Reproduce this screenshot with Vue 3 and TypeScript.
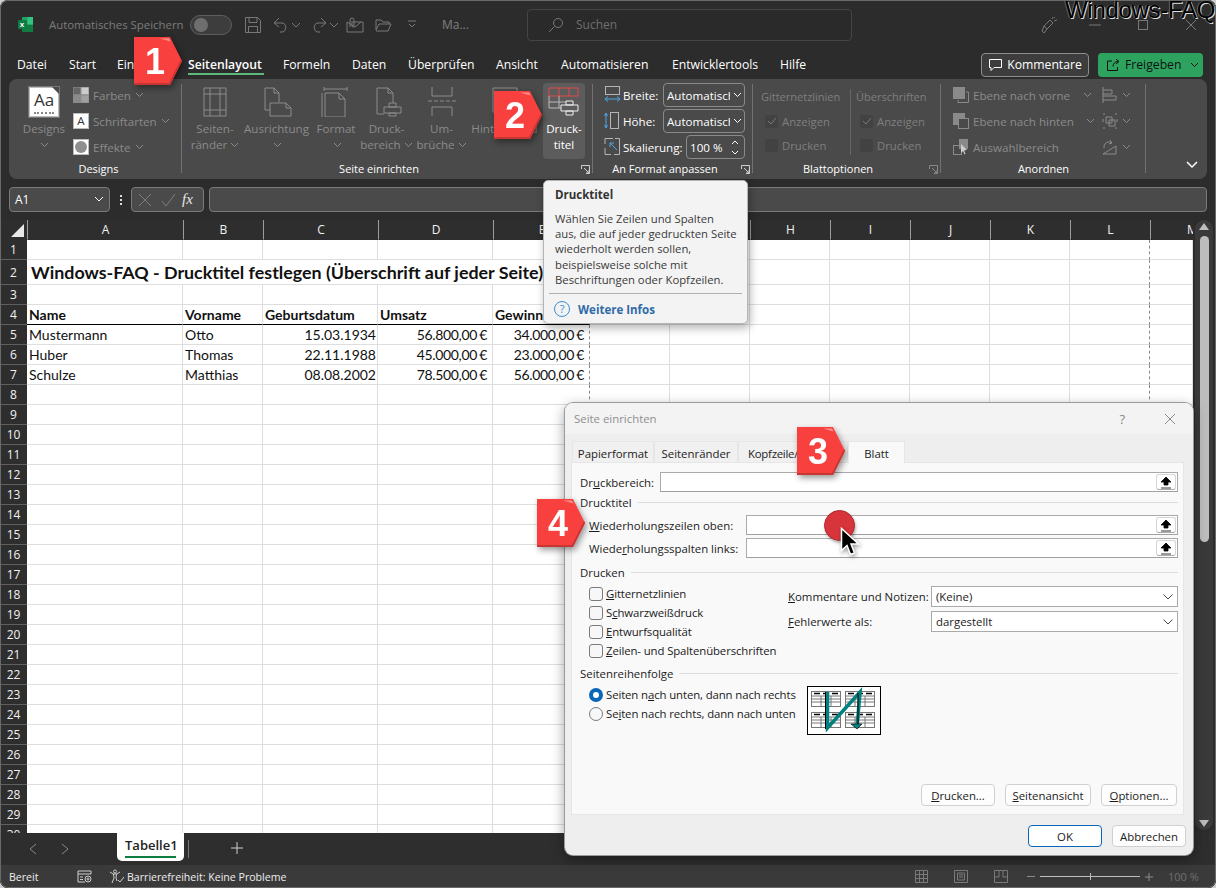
<template>
  <div class="window">
    <!-- title bar -->
    <header class="titlebar">
      <svg class="logo" width="17" height="17" viewBox="0 0 17 17">
        <rect x="5" y="1" width="11" height="15" rx="1" fill="#21a366" />
        <rect x="5" y="8.5" width="11" height="7.5" fill="#107c41" />
        <rect x="10.5" y="1" width="5.5" height="7.5" fill="#33c481" />
        <rect x="1" y="4" width="9" height="9" rx="1" fill="#107c41" />
        <text x="2.8" y="11.3" class="logo-x">x</text>
      </svg>
      <span class="autosave">Automatisches Speichern</span>
      <span class="toggle"><i></i></span>
      <svg class="qat ml12" width="18" height="18" viewBox="0 0 18 18"><path d="M1.5 1.5h12l3 3v12h-15zM5 1.5v5h8v-5M4.5 16.5v-6h9v6" /></svg>
      <svg class="qat ml11" width="16" height="16" viewBox="0 0 16 16"><path d="M1 6l5-5M1 6l5 4M1 6h9a5 5 0 0 1 0 9H7" /></svg>
      <svg class="qat ml2" width="10" height="6" viewBox="0 0 10 6"><path d="M1 1l4 4 4-4" /></svg>
      <svg class="qat ml10" width="16" height="16" viewBox="0 0 16 16"><path d="M15 6l-5-5M15 6l-5 4M15 6H6a5 5 0 0 0 0 9h3" /></svg>
      <svg class="qat ml2" width="10" height="6" viewBox="0 0 10 6"><path d="M1 1l4 4 4-4" /></svg>
      <svg class="qat ml7" width="18" height="16" viewBox="0 0 18 16"><path d="M7 5h10v10H1V5M1 5l8 5 6-5M4 10V3a2 2 0 0 1 4 0v6a1 1 0 0 1-2 0V4" /></svg>
      <svg class="qat ml11" width="17" height="14" viewBox="0 0 17 14"><path d="M1 12V2h5l2 2h6v2M1 12l3-6h12l-3 7H1" /></svg>
      <svg class="qat ml15" width="10" height="9" viewBox="0 0 10 9"><path d="M1 1h8M2 4l3 3 3-3" /></svg>
      <span class="filename">Ma...</span>
      <div class="search">
        <svg class="qat" width="16" height="16" viewBox="0 0 16 16"><circle cx="10" cy="6" r="4.5" /><path d="M6.5 9.5L1 15" /></svg>
        <span>Suchen</span>
      </div>
      <svg class="qat ml188" width="18" height="18" viewBox="0 0 18 18"><path d="M4 10l6-6 3 3-6 6zM4 10l-2 5 2 2 3-4M12 3l1-2M14 5l3-1M14 2l1-1" /></svg>
      <svg class="qat ml31" width="12" height="12" viewBox="0 0 12 12"><path d="M0 6h12" /></svg>
      <svg class="qat ml37" width="10" height="10" viewBox="0 0 10 10"><rect x="0.5" y="0.5" width="9" height="9" /></svg>
      <svg class="qat ml37" width="12" height="12" viewBox="0 0 12 12"><path d="M1 1l10 10M11 1L1 11" /></svg>
    </header>
    <div class="watermark">Windows-FAQ</div>

    <!-- ribbon tabs -->
    <nav class="menu">
      <span v-for="t in menuTabs" :key="t" class="menu-item" :class="{ current: t === 'Seitenlayout' }"><b>{{ t }}</b></span>
      <button class="comment-btn">
        <svg width="15" height="14" viewBox="0 0 15 14"><path d="M1.5 1.5h12v8H6l-3 3v-3H1.5z" /></svg>
        Kommentare
      </button>
      <button class="share-btn">
        <svg width="15" height="14" viewBox="0 0 15 14"><path d="M6 3H1.5v9.5h10V9M7 8.5c0-3 2-5 5-5M10 1l3 2.5L10 6" /></svg>
        <span class="share-label">Freigeben</span>
        <svg class="share-chev" width="9" height="6" viewBox="0 0 9 6"><path d="M1 1l3.5 3.5L8 1" /></svg>
      </button>
    </nav>

    <!-- ribbon -->
    <section class="ribbon">
      <div class="group g-designs">
        <div class="body designs-body">
          <div class="big">
            <div class="aa-box"><span>Aa</span><i></i></div>
            <div class="big-label">Designs<br /><svg class="chev" width="9" height="6" viewBox="0 0 9 6"><path d="M1 1l3.5 3.5L8 1" /></svg></div>
          </div>
          <div class="small-col">
            <div class="small">
              <svg width="16" height="16" viewBox="0 0 16 16"><rect width="8" height="8" fill="#666" /><rect x="8" width="8" height="8" fill="#ccc" /><rect y="8" width="8" height="8" fill="#8a8a8a" /><rect x="8" y="8" width="8" height="8" fill="#a0a0a0" /></svg>
              <span>Farben</span><svg class="chev" width="9" height="6" viewBox="0 0 9 6"><path d="M1 1l3.5 3.5L8 1" /></svg>
            </div>
            <div class="small">
              <span class="font-a">A</span>
              <span>Schriftarten</span><svg class="chev" width="9" height="6" viewBox="0 0 9 6"><path d="M1 1l3.5 3.5L8 1" /></svg>
            </div>
            <div class="small">
              <span class="font-a"><i class="dot"></i></span>
              <span>Effekte</span><svg class="chev" width="9" height="6" viewBox="0 0 9 6"><path d="M1 1l3.5 3.5L8 1" /></svg>
            </div>
          </div>
        </div>
        <div class="group-label">Designs</div>
      </div>

      <div class="group g-page">
        <div class="body page-body">
          <div v-for="b in pageButtons" :key="b.top" class="big">
            <svg class="big-icon" width="30" height="30" viewBox="0 0 30 30"><path :d="b.d" /></svg>
            <div class="big-label">{{ b.top }}<br />{{ b.bottom }}<svg v-if="b.chev" class="chev" width="9" height="6" viewBox="0 0 9 6"><path d="M1 1l3.5 3.5L8 1" /></svg></div>
          </div>
          <div class="big hot">
            <svg class="big-icon print" width="32" height="30" viewBox="0 0 32 30">
              <path class="red" d="M1 1h29v8H1zM11 1v8M21 1v8" />
              <path d="M1 9v12h10V9M1 15h18M11 21h2" />
              <path class="wh" d="M18 14h7v4h-7zM13 18h17v6H13zM18 24h7v4h-7z" />
            </svg>
            <div class="big-label">Druck-<br />titel</div>
          </div>
        </div>
        <div class="group-label">Seite einrichten</div>
        <svg class="launcher" width="9" height="9" viewBox="0 0 9 9"><path d="M.5 4V.5h8v8H5M3 3l5 5M8 5v3H5" /></svg>
      </div>

      <div class="group g-fit">
        <div class="body fit-body">
          <div class="fit-row">
            <svg class="fit-icon" width="17" height="18" viewBox="0 0 17 18"><rect x="1.5" y="0.5" width="14" height="8" /><path class="blue" d="M1 13h15M1 13l3-2.5M1 13l3 2.5M16 13l-3-2.5M16 13l-3 2.5" /></svg>
            <span class="fit-label">Breite:</span>
            <span class="combo"><span class="combo-text">Automatisch</span><svg width="9" height="6" viewBox="0 0 9 6"><path d="M1 1l3.5 3.5L8 1" /></svg></span>
          </div>
          <div class="fit-row">
            <svg class="fit-icon" width="17" height="18" viewBox="0 0 17 18"><rect x="6.5" y="0.5" width="8" height="16" /><path class="blue" d="M2 1v15M2 1L.5 4M2 1l1.5 3M2 16L.5 13M2 16l1.5-3" /></svg>
            <span class="fit-label">Höhe:</span>
            <span class="combo"><span class="combo-text">Automatisch</span><svg width="9" height="6" viewBox="0 0 9 6"><path d="M1 1l3.5 3.5L8 1" /></svg></span>
          </div>
          <div class="fit-row">
            <svg class="fit-icon" width="17" height="18" viewBox="0 0 17 18"><path d="M1 6V.5h8M11 .5h4.500v16H10M1 10v6.500h6" /><path class="blue" d="M6 5l7 7M6 5h4M6 5v4" /></svg>
            <span class="fit-label scale-label">Skalierung:</span>
            <span class="spin">100 %<span class="spin-arrows"><svg width="8" height="5" viewBox="0 0 8 5"><path d="M1 4l3-3 3 3" /></svg><svg width="8" height="5" viewBox="0 0 8 5"><path d="M1 1l3 3 3-3" /></svg></span></span>
          </div>
        </div>
        <div class="group-label">An Format anpassen</div>
        <svg class="launcher" width="9" height="9" viewBox="0 0 9 9"><path d="M.5 4V.5h8v8H5M3 3l5 5M8 5v3H5" /></svg>
      </div>

      <div class="group g-sheet">
        <div class="body sheet-body">
          <div class="sheet-col">
            <div class="sheet-head">Gitternetzlinien</div>
            <div class="sheet-check"><span class="dark-cb on"><svg width="10" height="8" viewBox="0 0 10 8"><path d="M1 4l3 3 5-6" /></svg></span>Anzeigen</div>
            <div class="sheet-check"><span class="dark-cb"></span>Drucken</div>
          </div>
          <div class="sheet-col second">
            <div class="sheet-head">Überschriften</div>
            <div class="sheet-check"><span class="dark-cb on"><svg width="10" height="8" viewBox="0 0 10 8"><path d="M1 4l3 3 5-6" /></svg></span>Anzeigen</div>
            <div class="sheet-check"><span class="dark-cb"></span>Drucken</div>
          </div>
        </div>
        <div class="group-label">Blattoptionen</div>
        <svg class="launcher dim" width="9" height="9" viewBox="0 0 9 9"><path d="M.5 4V.5h8v8H5M3 3l5 5M8 5v3H5" /></svg>
      </div>

      <div class="group g-arrange">
        <div class="body arrange-body">
          <div class="arrange-col">
            <div class="small">
              <svg width="16" height="16" viewBox="0 0 16 16"><rect x="0.500" y="0.500" width="11" height="11" fill="#8a8a8a" /><path d="M13 5h2.500v10.500H5V13" /></svg>
              <span class="arr-text">Ebene nach vorne</span><svg class="chev" width="9" height="6" viewBox="0 0 9 6"><path d="M1 1l3.500 3.500L8 1" /></svg>
            </div>
            <div class="small">
              <svg width="16" height="16" viewBox="0 0 16 16"><rect x="0.500" y="0.500" width="11" height="11" fill="#8a8a8a" /><rect x="5.500" y="5.500" width="10" height="10" fill="#4a4a4a" /></svg>
              <span class="arr-text back">Ebene nach hinten</span><svg class="chev" width="9" height="6" viewBox="0 0 9 6"><path d="M1 1l3.500 3.500L8 1" /></svg>
            </div>
            <div class="small">
              <svg width="16" height="16" viewBox="0 0 16 16"><rect x="6.500" y="0.500" width="8" height="9" fill="#8a8a8a" /><rect x="0.500" y="6.500" width="8" height="9" /><path d="M8 5l6 6-3 .5 1.500 3.500-1 .5L10 12l-2 2z" fill="#cfcfcf" stroke="none" /></svg>
              <span>Auswahlbereich</span>
            </div>
          </div>
          <div class="arrange-col narrow">
            <div class="small">
              <svg width="16" height="16" viewBox="0 0 16 16"><path d="M1 0v16M1 3h9v4H1M1 9h13v4H1" /></svg>
              <svg class="chev" width="9" height="6" viewBox="0 0 9 6"><path d="M1 1l3.500 3.500L8 1" /></svg>
            </div>
            <div class="small">
              <svg width="16" height="16" viewBox="0 0 16 16"><path d="M4 4h6v6H4zM7 7h6v6H7zM1 1h2M13 1h2M1 15h2M13 15h2M1 6v3M15 6v3" /></svg>
              <svg class="chev" width="9" height="6" viewBox="0 0 9 6"><path d="M1 1l3.500 3.500L8 1" /></svg>
            </div>
            <div class="small">
              <svg width="16" height="16" viewBox="0 0 16 16"><path d="M1 15L14 7v8zM2 9a5 5 0 0 1 8-5M8 1l2 3-3 1" /></svg>
              <svg class="chev" width="9" height="6" viewBox="0 0 9 6"><path d="M1 1l3.500 3.500L8 1" /></svg>
            </div>
          </div>
        </div>
        <div class="group-label">Anordnen</div>
      </div>
      <svg class="collapse" width="12" height="8" viewBox="0 0 12 8"><path d="M1 1l5 5 5-5" /></svg>
    </section>

    <!-- formula bar -->
    <div class="formula">
      <div class="namebox">A1<svg width="10" height="7" viewBox="0 0 10 7"><path d="M1 1l4 4 4-4" /></svg></div>
      <span class="dots"><i></i><i></i><i></i></span>
      <div class="fx-box">
        <svg width="14" height="14" viewBox="0 0 14 14"><path d="M1 1l12 12M13 1L1 13" /></svg>
        <svg width="15" height="14" viewBox="0 0 15 14"><path d="M1 8l4 5L14 1" /></svg>
        <span class="fx">fx</span>
      </div>
      <div class="formula-input"></div>
    </div>

    <!-- sheet -->
    <div class="sheet">
      <div class="grid">
        <div class="corner"><i></i></div>
        <div v-for="c in columns" :key="c" class="colhead" :class="{ 'col-m': c === 'M' }">{{ c }}</div>
        <template v-for="r in rows" :key="r.n">
          <div class="rowhead">{{ r.n }}</div>
          <div v-if="r.title" class="cell title-cell brk">{{ r.title }}</div>
          <template v-if="!r.title">
            <div
              v-for="(c, i) in columns.slice(0, 5)"
              :key="c"
              class="cell"
              :class="{ num: i === 2 && r.n > 4, money: i > 2 && r.n > 4, strong: r.n === 4, brk: i === 4 }"
            >{{ r.cells[i] }}</div>
          </template>
          <div v-for="c in columns.slice(5)" :key="c" class="cell" :class="{ brk: c === 'L' }"></div>
        </template>
      </div>
      <div class="vscroll">
        <div class="track">
          <i class="up"></i>
          <span class="thumb"></span>
          <i class="down"></i>
        </div>
      </div>
    </div>

    <!-- sheet tabs -->
    <div class="tabs">
      <svg class="nav-arrow" width="8" height="12" viewBox="0 0 8 12"><path d="M7 1L1 6l6 5" /></svg>
      <svg class="nav-arrow second" width="8" height="12" viewBox="0 0 8 12"><path d="M1 1l6 5-6 5" /></svg>
      <div class="sheet-tab"><span>Tabelle1</span></div>
      <i class="tab-sep"></i>
      <svg class="plus" width="12" height="12" viewBox="0 0 12 12"><path d="M6 0v12M0 6h12" /></svg>
    </div>

    <!-- status bar -->
    <footer class="status">
      <span class="ready">Bereit</span>
      <svg class="st-icon" width="15" height="13" viewBox="0 0 15 13"><path d="M1 1h13v3H1zM1 4v8h7M3 7h3M3 9.500h3" /><circle cx="11" cy="9" r="3" /><circle cx="11" cy="9" r="1" /></svg>
      <svg class="st-icon access" width="16" height="15" viewBox="0 0 16 15"><circle cx="6" cy="2.500" r="1.500" /><path d="M1 3l3 2h4l3-2M4.500 5l.5 4-2 5M7.500 5L7 9l1 3M9 11l2 2 4-5" /></svg>
      <span class="access-text">Barrierefreiheit: Keine Probleme</span>
      <svg class="view-icon" width="13" height="13" viewBox="0 0 13 13"><path d="M.5.5h12v12H.5zM4.500.5v12M8.500.5v12M.5 4.500h12M.5 8.500h12" /></svg>
      <svg class="view-icon v2" width="14" height="13" viewBox="0 0 14 13"><path d="M.5.5h13v12H.5zM3.500 3h7v7h-7zM5 5h4M5 7h4" /></svg>
      <svg class="view-icon v2" width="14" height="13" viewBox="0 0 14 13"><path d="M.5.5h13v12H.5zM.5 7h4.500V.5M9 .5V7h4.500" /></svg>
      <div class="zoom">
        <i class="z-minus"></i>
        <span class="z-track"><i></i></span>
        <svg width="8" height="8" viewBox="0 0 8 8"><path d="M4 0v8M0 4h8" /></svg>
        <span class="z-val">100 %</span>
      </div>
    </footer>

    <!-- tooltip -->
    <aside class="tooltip">
      <div class="tip-title">Drucktitel</div>
      <p class="tip-text">Wählen Sie Zeilen und Spalten aus, die auf jeder gedruckten Seite wiederholt werden sollen, beispielsweise solche mit Beschriftungen oder Kopfzeilen.</p>
      <div class="tip-more">
        <span class="tip-help">?</span>
        <b>Weitere Infos</b>
      </div>
    </aside>

    <!-- dialog -->
    <div class="dialog">
      <div class="dlg-title">
        <span>Seite einrichten</span>
        <span class="dlg-help">?</span>
        <svg width="12" height="12" viewBox="0 0 12 12"><path d="M1 1l10 10M11 1L1 11" /></svg>
      </div>
      <div class="dlg-tabs">
        <span class="dlg-tab t1">Papierformat</span>
        <span class="dlg-tab t2">Seitenränder</span>
        <span class="dlg-tab t3">Kopfzeile/Fußzeile</span>
        <span class="dlg-tab t4">Blatt</span>
      </div>
      <div class="panel">
        <div class="field first">
          <label class="lab-print">Dr<u>u</u>ckbereich:</label>
          <div class="input"><span class="pick"><svg width="12" height="13" viewBox="0 0 12 13"><path d="M6 1l5 5H8v3H4V6H1zM1 12h10" /></svg></span></div>
        </div>
        <div class="sect"><span>Drucktitel</span><i></i></div>
        <div class="field indented">
          <label class="lab-rep"><u>W</u>iederholungszeilen oben:</label>
          <div class="input"><span class="pick"><svg width="12" height="13" viewBox="0 0 12 13"><path d="M6 1l5 5H8v3H4V6H1zM1 12h10" /></svg></span></div>
        </div>
        <div class="field indented second">
          <label class="lab-rep">Wiede<u>r</u>holungsspalten links:</label>
          <div class="input"><span class="pick"><svg width="12" height="13" viewBox="0 0 12 13"><path d="M6 1l5 5H8v3H4V6H1zM1 12h10" /></svg></span></div>
        </div>
        <div class="sect print-sect"><span>Drucken</span><i></i></div>
        <div class="print-opts">
          <div class="checks">
            <div v-for="o in printOptions" :key="o.rest" class="opt">
              <span class="cb"></span>
              <span>{{ o.pre }}<u>{{ o.key }}</u>{{ o.rest }}</span>
            </div>
          </div>
          <div class="selects">
            <div class="sel-row">
              <label><u>K</u>ommentare und Notizen:</label>
              <div class="select">(Keine)<svg width="10" height="6" viewBox="0 0 10 6"><path d="M.5.5L5 5 9.500.5" /></svg></div>
            </div>
            <div class="sel-row">
              <label><u>F</u>ehlerwerte als:</label>
              <div class="select">dargestellt<svg width="10" height="6" viewBox="0 0 10 6"><path d="M.5.5L5 5 9.500.5" /></svg></div>
            </div>
          </div>
        </div>
        <div class="sect order-sect"><span>Seitenreihenfolge</span><i></i></div>
        <div class="order">
          <div class="radios">
            <div class="opt"><span class="radio on"></span><span>Seiten n<u>a</u>ch unten, dann nach rechts</span></div>
            <div class="opt"><span class="radio"></span><span>Se<u>i</u>ten nach rechts, dann nach unten</span></div>
          </div>
          <svg class="order-pic" width="74" height="49" viewBox="0 0 74 49">
            <rect x="0.500" y="0.500" width="73" height="48" fill="#fff" stroke="#000" />
            <g v-for="p in miniPages" :key="p.x + '-' + p.y" :transform="`translate(${p.x} ${p.y})`">
              <rect x="0.500" y="0.500" width="29" height="15" fill="#fff" stroke="#777" />
              <path d="M3 2.500h6M12 2.500h6M21 2.500h6" stroke="#000" stroke-width="1.500" />
              <path d="M1 5h28M1 8h28M1 11h28M10 5v10M20 5v10" stroke="#777" stroke-width="1" />
            </g>
            <path d="M20.500 6v36L53 6l-3 36" fill="none" stroke="#00807f" stroke-width="3.500" />
            <path d="M18.500 6v37M51 7v35" stroke="#000" fill="none" />
            <path d="M44 38h11l-5 5z" fill="#00807f" stroke="#000" stroke-width=".6" />
          </svg>
        </div>
        <div class="panel-btns">
          <button class="btn w1"><u>D</u>rucken...</button>
          <button class="btn w2"><u>S</u>eitenansicht</button>
          <button class="btn w3"><u>O</u>ptionen...</button>
        </div>
      </div>
      <div class="dlg-btns">
        <button class="btn big-btn ok">OK</button>
        <button class="btn big-btn">Abbrechen</button>
      </div>
    </div>

    <!-- step badges -->
    <div v-for="b in badges" :key="b.n" class="badge" :class="b.cls">
      <svg width="48" height="48" viewBox="0 0 48 48">
        <path d="M0 0h36l12 24-12 24H0z" fill="#f8413f" />
        <path d="M26 1.500h9l1.500 3z" fill="#ff8f8d" />
        <path d="M36 48l12-24-1-2-12 24H0v2z" fill="#c93533" />
      </svg>
      <span>{{ b.n }}</span>
    </div>

    <!-- mouse marker -->
    <div class="marker"></div>
    <svg class="pointer" width="20" height="30" viewBox="0 0 20 30">
      <path d="M1.500 1.500v22l5.500-5 3.500 9 4-1.500-3.500-9h7.500z" fill="#000" stroke="#fff" stroke-width="1.500" />
    </svg>
  </div>
</template>

<script setup lang="ts">
interface SheetRow {
  n: number;
  title?: string;
  cells: string[];
}

const menuTabs = ['Datei', 'Start', 'Einfügen', 'Seitenlayout', 'Formeln', 'Daten', 'Überprüfen', 'Ansicht', 'Automatisieren', 'Entwicklertools', 'Hilfe'];

const pageButtons = [
  { top: 'Seiten-', bottom: 'ränder', chev: true, d: 'M4 1h22v28H4zM10 1v28M20 1v28M4 7h22M4 23h22' },
  { top: 'Ausrichtung', bottom: '', chev: true, d: 'M3 1h9l5 5v9M3 1v22h5M12 1v5h5M8 16v13h21V21l-5-5H8zM24 16v5h5' },
  { top: 'Format', bottom: '', chev: true, d: 'M3 2h23M3 0v4M26 0v4M4 6v24h20V12l-6-6H4zM18 6v6h6M1 6v24' },
  { top: 'Druck-', bottom: 'bereich', chev: true, d: 'M5 1h11l5 5v10M5 1v26h7M16 1v5h5M17 16h7v4h-7zM12 20h17v6H12zM17 26h7v3h-7z' },
  { top: 'Um-', bottom: 'brüche', chev: true, d: 'M5 0v9h20V0M1 14h4m2 0h4m2 0h4m2 0h4m2 0h4M5 29v-9h20v9' },
  { top: 'Hintergrund', bottom: '', chev: false, d: 'M3 1h24v24H3z' },
];

const columns = ['A', 'B', 'C', 'D', 'E', 'F', 'G', 'H', 'I', 'J', 'K', 'L', 'M'];

const filled: Record<number, string[]> = {
  4: ['Name', 'Vorname', 'Geburtsdatum', 'Umsatz', 'Gewinn'],
  5: ['Mustermann', 'Otto', '15.03.1934', '56.800,00 €', '34.000,00 €'],
  6: ['Huber', 'Thomas', '22.11.1988', '45.000,00 €', '23.000,00 €'],
  7: ['Schulze', 'Matthias', '08.08.2002', '78.500,00 €', '56.000,00 €'],
};

const rows: SheetRow[] = Array.from({ length: 30 }, (_, i) => {
  const n = i + 1;
  return {
    n,
    title: n === 2 ? 'Windows-FAQ - Drucktitel festlegen (Überschrift auf jeder Seite)' : undefined,
    cells: filled[n] ?? ['', '', '', '', ''],
  };
});

const printOptions = [
  { pre: '', key: 'G', rest: 'itternetzlinien' },
  { pre: 'S', key: 'c', rest: 'hwarzweißdruck' },
  { pre: '', key: 'E', rest: 'ntwurfsqualität' },
  { pre: '', key: 'Z', rest: 'eilen- und Spaltenüberschriften' },
];

const miniPages = [
  { x: 4, y: 5 },
  { x: 38, y: 5 },
  { x: 4, y: 26 },
  { x: 38, y: 26 },
];

const badges = [
  { n: 1, cls: 'b1' },
  { n: 2, cls: 'b2' },
  { n: 3, cls: 'b3' },
  { n: 4, cls: 'b4' },
];
</script>

<style>
html, body { margin: 0; background: #cfcfcf; }
</style>

<style scoped>
.window { position: relative; width: 1216px; height: 888px; overflow: hidden; border-radius: 8px; background: #2c2c2c; font-family: "Open Sans", "Noto Sans", sans-serif; font-size: 12px; color: #fff; display: flex; flex-direction: column; }
.window::after { content: ""; position: absolute; inset: 0; border: 1px solid #6a6a6a; border-radius: 8px; pointer-events: none; }
svg { display: block; flex: none; fill: none; stroke: currentColor; }

/* title bar */
.titlebar { height: 48px; flex: none; display: flex; align-items: center; padding: 1px 0 0 17px; color: #8f8f8f; box-sizing: border-box; }
.logo { stroke: none; margin-right: 15px; }
.logo-x { font: bold 8px "Liberation Sans", sans-serif; fill: #fff; stroke: none; }
.autosave { width: 141px; color: #7c7c7c; font-size: 11.4px; white-space: nowrap; }
.toggle { width: 42px; height: 20px; border-radius: 10px; border: 1px solid #5e5e5e; background: #3d3d3d; box-sizing: border-box; display: flex; align-items: center; padding-left: 3px; }
.toggle i { width: 14px; height: 14px; border-radius: 50%; background: #6e6e6e; }
.qat { color: #787878; }
.ml2 { margin-left: 2px; }
.ml7 { margin-left: 7px; }
.ml10 { margin-left: 10px; }
.ml11 { margin-left: 11px; }
.ml12 { margin-left: 12px; }
.ml15 { margin-left: 15px; }
.ml31 { margin-left: 31px; }
.ml37 { margin-left: 37px; }
.ml188 { margin-left: 188px; }
.filename { margin-left: 25px; width: 85px; color: #808080; }
.search { width: 325px; height: 32px; box-sizing: border-box; border: 1px solid #454545; border-radius: 4px; background: #2a2a2a; display: flex; align-items: center; gap: 12px; padding-left: 20px; color: #6e6e6e; }
.watermark { position: absolute; left: 1065px; top: -4px; font: 24px "Liberation Sans", sans-serif; letter-spacing: -.3px; color: #000; white-space: nowrap; text-shadow: 1px 1px 0 #ddd, -1px 0 0 #666; }

/* menu */
.menu { height: 31px; flex: none; display: grid; grid-template-columns: 52px 48px 71px 95px 69px 56px 88px 65px 111px 108px 201px 117px 105px; padding-left: 17px; align-items: center; }
.menu-item { height: 31px; line-height: 33px; white-space: nowrap; font-size: 12.2px; color: #fff; position: relative; }
.menu-item b { font-weight: 400; }
.menu-item.current b { font-weight: 600; }
.menu-item.current::after { content: ""; position: absolute; left: 0; top: 25px; width: 76px; height: 2px; background: #5fb97f; }
.comment-btn { height: 24px; margin-top: 2px; width: 108px; grid-column: 12; box-sizing: border-box; border: 1px solid #8e8e8e; border-radius: 4px; background: #3d3d3d; color: #fff; font: 12.2px "Open Sans", sans-serif; display: flex; align-items: center; justify-content: center; gap: 4px; padding: 0; }
.share-btn { height: 24px; margin-top: 2px; width: 105px; border: 0; border-radius: 4px; background: #2ea35f; color: #111; font: 12.2px "Open Sans", sans-serif; display: flex; align-items: center; padding: 0 0 0 8px; }
.share-label { margin-left: 4px; }
.share-chev { margin-left: 9px; }

/* ribbon */
.ribbon { position: relative; flex: none; margin: 0 9px; height: 100px; background: #4a4a4a; border-radius: 8px; display: flex; }
.group { position: relative; flex: none; height: 100%; box-sizing: border-box; }
.group::after { content: ""; position: absolute; right: 0; top: 5px; height: 89px; width: 1px; background: #727272; }
.g-designs { width: 173px; }
.g-page { width: 411px; }
.g-fit { width: 160px; }
.g-sheet { width: 188px; }
.g-arrange { width: 205px; }
.body { height: 81px; color: #8b8b8b; box-sizing: border-box; }
.group-label { height: 19px; text-align: center; line-height: 17px; color: #fff; font-size: 11px; }
.g-designs .group-label { padding-left: 6px; }
.g-page .group-label { padding-right: 17px; }
.g-fit .group-label { padding-right: 16px; }
.g-sheet .group-label { padding-right: 18px; }
.launcher { position: absolute; right: 3px; bottom: 5px; color: #cfcfcf; }
.launcher.dim { color: #888; }
.chev { display: inline-block; color: #8b8b8b; }
.big { display: flex; flex-direction: column; align-items: center; padding-top: 4px; box-sizing: border-box; height: 76px; margin-top: 4px; }
.big-icon { height: 30px; color: #8b8b8b; stroke-width: 1; }
.big-label { text-align: center; line-height: 16px; margin-top: 4px; white-space: nowrap; font-size: 11.6px; }
.big-label .chev { margin-left: 3px; vertical-align: 1px; }
.designs-body { display: flex; padding-left: 8px; }
.designs-body .big { width: 54px; }
.designs-body .big-label .chev { margin: 3px auto 0; }
.aa-box { position: relative; width: 30px; height: 30px; box-sizing: border-box; background: #fff; border: 1px solid #bbb; outline: 1px solid #777; color: #333; font: 17px "Open Sans", sans-serif; text-align: center; line-height: 24px; }
.aa-box::after { content: ""; position: absolute; right: -1px; top: -1px; border-style: solid; border-width: 7px 7px 0 0; border-color: #4a4a4a transparent transparent transparent; transform: rotate(90deg); }
.aa-box i { position: absolute; left: 4px; right: 4px; bottom: 2px; border-bottom: 2px dotted #888; }
.small-col { display: flex; flex-direction: column; padding: 8px 0 0 2px; gap: 10px; }
.small { height: 16px; display: flex; align-items: center; gap: 4px; white-space: nowrap; color: #8b8b8b; font-size: 11.6px; }
.font-a { width: 16px; height: 16px; box-sizing: border-box; background: #fff; border: 1px solid #bbb; color: #333; text-align: center; line-height: 14px; display: flex; align-items: center; justify-content: center; }
.dot { width: 12px; height: 12px; border-radius: 50%; background: #8f8f8f; }
.page-body { display: grid; grid-template-columns: 50px 73px 46px 55px 55px 71px 45px; padding-left: 8px; }
.hot { background: #5c5c5c; border-radius: 4px; color: #fff; margin-left: 3px; width: 42px; }
.print { color: #b9b9b9; }
.print .red { stroke: #e04b4b; }
.print .wh { stroke: #ededed; fill: #5c5c5c; }
.fit-body { padding: 4px 0 0 11px; display: flex; flex-direction: column; gap: 2px; color: #fff; }
.fit-row { height: 24px; display: flex; align-items: center; }
.fit-icon { color: #b5b5b5; margin-right: 2px; }
.fit-icon .blue { stroke: #4aa6e8; }
.fit-label { width: 40px; font-size: 11.6px; white-space: nowrap; }
.scale-label { width: 63px; }
.combo { width: 82px; height: 24px; box-sizing: border-box; border: 1px solid #8a8a8a; border-radius: 4px; display: flex; align-items: center; padding-left: 3px; font-size: 11.6px; gap: 3px; }
.combo-text { width: 63px; overflow: hidden; white-space: nowrap; }
.spin { width: 59px; height: 24px; box-sizing: border-box; border: 1px solid #8a8a8a; border-radius: 4px; display: flex; align-items: center; justify-content: space-between; padding: 0 5px 0 3px; font-size: 11.6px; }
.spin-arrows { display: flex; flex-direction: column; gap: 5px; }
.sheet-body { display: flex; }
.sheet-col { width: 97px; padding: 11px 0 0 8px; box-sizing: border-box; position: relative; height: 76px; }
.sheet-col.second { padding-left: 6px; width: 88px; }
.sheet-col.second::before { content: ""; position: absolute; left: 0; top: 10px; height: 66px; width: 1px; background: #666; }
.sheet-head { font-size: 11px; line-height: 14px; white-space: nowrap; color: #7f7f7f; }
.sheet-check { display: flex; align-items: center; gap: 4px; margin: 9.5px 0 0 4px; height: 15px; color: #7f7f7f; font-size: 11.3px; }
.dark-cb { width: 13px; height: 13px; border-radius: 2px; background: #424242; display: flex; align-items: center; justify-content: center; color: #7a7a7a; }
.arrange-body { display: flex; padding: 8px 0 0 12px; }
.arrange-col { width: 149px; display: flex; flex-direction: column; gap: 10px; }
.arrange-col svg:first-child { color: #8b8b8b; }
.arrange-col.narrow { width: 40px; }
.arr-text { width: 106px; }
.arr-text.back { width: 109px; }
.collapse { position: absolute; right: 9px; top: 82px; color: #fff; stroke-width: 1.5; }

/* formula bar */
.formula { height: 41px; flex: none; display: flex; align-items: flex-start; padding: 8px 9px 0; box-sizing: border-box; }
.namebox { width: 101px; height: 25px; box-sizing: border-box; border: 1px solid #7a7a7a; border-radius: 4px; background: #4a4a4a; display: flex; align-items: center; justify-content: space-between; padding: 0 5px 0 5px; font-size: 12px; }
.dots { width: 22px; height: 25px; display: flex; flex-direction: column; align-items: center; justify-content: center; gap: 2px; }
.dots i { width: 2px; height: 2px; background: #ddd; }
.fx-box { width: 73px; height: 25px; box-sizing: border-box; border: 1px solid #7a7a7a; border-radius: 4px; background: #4a4a4a; display: flex; align-items: center; color: #7d7d7d; padding-left: 6px; gap: 9px; margin-left: -1px; }
.fx { font: italic 15px "Liberation Serif", serif; color: #e8e8e8; margin-left: -3px; }
.formula-input { flex: 1; height: 25px; margin-left: 5px; box-sizing: border-box; border: 1px solid #7a7a7a; border-radius: 4px; background: #4a4a4a; }

/* sheet */
.sheet { height: 613px; flex: none; display: flex; overflow: hidden; }
.grid { width: 1193px; display: grid; grid-template-columns: 27px 156px 80px 115px 115px 97px 80px 80px 80px 80px 80px 80px 80px 43px; grid-template-rows: 20px 20px 25px repeat(28, 20px); background: #fff; align-content: start; }
.corner { background: #2e2e2e; position: relative; }
.corner i { position: absolute; right: 3px; bottom: 3px; border-style: solid; border-width: 0 0 13px 13px; border-color: transparent transparent #e8e8e8 transparent; }
.colhead { background: #2e2e2e; border-left: 1px solid #9c9c9c; text-align: center; line-height: 19px; color: #f2f2f2; font-size: 12px; border-bottom: 1px solid #2e2e2e; box-sizing: border-box; overflow: hidden; }
.col-m { text-align: left; padding-left: 36px; }
.rowhead { background: #2e2e2e; border-bottom: 1px solid #5f5f5f; text-align: center; color: #f2f2f2; font-size: 12px; display: flex; align-items: center; justify-content: center; box-sizing: border-box; }
.cell { border-right: 1px solid #dedede; border-bottom: 1px solid #dedede; box-sizing: border-box; color: #111; font: 14px Lato, "Open Sans", sans-serif; line-height: 19px; padding-left: 2px; white-space: nowrap; overflow: hidden; }
.cell.brk { border-right: 1px dashed #8a8a8a; }
.cell.strong { font-weight: 700; border-bottom-color: #000; }
.cell.num { text-align: right; padding-right: 1px; }
.cell.money { text-align: right; padding-right: 5px; letter-spacing: -.35px; word-spacing: -1px; }
.title-cell { grid-column: span 5; font-weight: 700; font-size: 17.85px; line-height: 24px; padding-left: 4px; }
.vscroll { width: 23px; background: #2c2c2c; position: relative; }
.track { position: absolute; left: 2px; top: 0; bottom: 3px; width: 18px; background: #3a3a3a; border-radius: 9px; display: flex; flex-direction: column; align-items: center; }
.up { margin-top: 3px; border-style: solid; border-width: 0 5px 7px; border-color: transparent transparent #bdbdbd; }
.down { margin-top: auto; margin-bottom: 3px; border-style: solid; border-width: 7px 5px 0; border-color: #bdbdbd transparent transparent; }
.thumb { margin-top: 6px; width: 9px; height: 306px; border-radius: 5px; background: #bdbdbd; }

/* sheet tabs + status */
.tabs { height: 32px; flex: none; background: #2e2e2e; border-radius: 8px 8px 0 0; display: flex; align-items: flex-start; color: #8a8a8a; padding-left: 29px; box-sizing: border-box; position: relative; }
.nav-arrow { margin-top: 10px; }
.nav-arrow.second { margin-left: 24px; }
.sheet-tab { margin-left: 48px; width: 67px; height: 28px; background: #fff; border-radius: 0 0 5px 5px; box-sizing: border-box; text-align: center; color: #222; font-weight: 600; font-size: 13px; line-height: 25px; position: relative; }
.sheet-tab span { display: inline-block; width: 51px; height: 25px; border-bottom: 2px solid #107c41; white-space: nowrap; box-sizing: border-box; }
.tab-sep { margin: 7px 0 0 4px; width: 1px; height: 18px; background: #777; }
.plus { margin: 9px 0 0 42px; color: #cfcfcf; }
.status { height: 23px; flex: none; background: #3a3a3a; display: flex; align-items: center; padding-left: 9px; font-size: 10.6px; color: #eee; }
.ready { width: 68px; }
.st-icon { color: #cfcfcf; }
.st-icon.access { margin-left: 17px; }
.access-text { margin-left: 2px; width: 788px; white-space: nowrap; }
.view-icon { color: #7a7a7a; }
.view-icon.v2 { margin-left: 26px; }
.zoom { margin-left: 19px; display: flex; align-items: center; color: #8a8a8a; }
.z-minus { width: 8px; height: 1px; background: #8a8a8a; }
.z-track { margin: 0 5px; width: 100px; height: 1px; background: #bdbdbd; position: relative; }
.z-track i { position: absolute; left: 50px; top: -3px; width: 1px; height: 7px; background: #bdbdbd; }
.z-val { margin-left: 15px; font-size: 11px; color: #6f6f6f; }

/* tooltip */
.tooltip { position: absolute; left: 543px; top: 180px; width: 205px; height: 144px; box-sizing: border-box; background: #f3f3f3; border: 1px solid #b5b5b5; border-radius: 5px; box-shadow: 2px 4px 10px rgba(0, 0, 0, .3); color: #333; padding: 7px 5px 0; }
.tip-title { font-weight: 700; font-size: 11.5px; line-height: 14px; padding-left: 6px; color: #333; }
.tip-text { margin: 9px 0 0; padding: 0 4px 0 6px; font-size: 11.3px; line-height: 15.2px; color: #3a3a3a; height: 76px; }
.tip-more { margin-top: 6px; border-top: 1px solid #b0b0b0; display: flex; align-items: center; padding: 7px 0 0 5px; gap: 8px; color: #2f6aa8; font-size: 11.5px; }
.tip-help { width: 16px; height: 16px; box-sizing: border-box; border: 1px solid #3a8fd0; border-radius: 50%; text-align: center; line-height: 14px; font-size: 11px; color: #3a8fd0; }

/* dialog */
.dialog { position: absolute; left: 565px; top: 403px; width: 628px; height: 452px; box-sizing: border-box; background: #eeeeee; border-radius: 8px; box-shadow: 0 0 0 1px #9a9a9a, 0 4px 14px rgba(0, 0, 0, .4); color: #1b1b1b; display: flex; flex-direction: column; font-size: 11.4px; }
.dlg-title { height: 31px; flex: none; background: #f3f3f3; border-radius: 8px 8px 0 0; display: flex; align-items: center; padding: 0 17px 0 9px; color: #8e8e8e; font-size: 11.4px; }
.dlg-title span:first-child { flex: 1; }
.dlg-help { margin-right: 39px; font-size: 13px; color: #8a8a8a; }
.dlg-tabs { display: flex; margin: 7px 0 0 7px; height: 21px; flex: none; }
.dlg-tab { height: 21px; box-sizing: border-box; border: 1px solid #e6e6e6; border-bottom: 0; background: #f0f0f0; line-height: 24px; text-align: center; white-space: nowrap; overflow: hidden; color: #222; }
.t1 { width: 82px; }
.t2 { width: 84px; }
.t3 { width: 110px; text-align: left; padding-left: 9px; letter-spacing: -.25px; }
.t4 { width: 57px; background: #f9f9f9; position: relative; z-index: 1; height: 22px; }
.panel { flex: none; margin-left: 6px; width: 613px; height: 353px; box-sizing: border-box; background: #f9f9f9; border: 1px solid #e6e6e6; padding: 9px 5px 8px 8px; display: flex; flex-direction: column; }
.field { display: flex; align-items: center; height: 20px; flex: none; }
.field.indented { padding-left: 9px; margin-top: 6px; }
.field.second { margin-top: 3px; }
.field label { white-space: nowrap; }
.lab-print { width: 80px; }
.lab-rep { width: 157px; }
.input { flex: 1; height: 20px; box-sizing: border-box; background: #fff; border: 1px solid #aaa; border-bottom-color: #a0a0a0; display: flex; align-items: center; justify-content: flex-end; padding-right: 1px; }
.pick { width: 20px; height: 16px; box-sizing: border-box; border: 1px solid #d5d5d5; border-bottom-color: #aaa; border-radius: 3px; background: #fff; display: flex; align-items: center; justify-content: center; color: #000; }
.pick svg { fill: #000; stroke: #000; stroke-width: .8; }
.sect { display: flex; align-items: center; height: 14px; margin-top: 3px; gap: 6px; flex: none; }
.sect i { flex: 1; height: 1px; background: #dcdcdc; }
.print-sect { margin-top: 7px; }
.order-sect { margin-top: 6px; }
.print-opts { display: flex; margin-top: 5px; flex: none; }
.checks { width: 208px; padding-left: 9px; box-sizing: border-box; flex: none; }
.opt { height: 19px; display: flex; align-items: center; gap: 3px; white-space: nowrap; letter-spacing: -.12px; }
.cb { width: 14px; height: 14px; box-sizing: border-box; border: 1px solid #7a7a7a; border-radius: 3px; background: #f7f7f7; flex: none; }
.selects { flex: 1; padding-top: 2px; display: flex; flex-direction: column; gap: 4px; }
.sel-row { display: flex; align-items: center; height: 21px; }
.sel-row label { width: 143px; white-space: nowrap; }
.select { flex: 1; height: 21px; box-sizing: border-box; background: #fff; border: 1px solid #aaa; display: flex; align-items: center; justify-content: space-between; padding: 0 4px 0 4px; }
.select svg { color: #444; }
.order { display: flex; margin-top: 5px; flex: none; }
.radios { width: 227px; padding-left: 9px; box-sizing: border-box; flex: none; }
.radio { width: 14px; height: 14px; box-sizing: border-box; border: 1px solid #7a7a7a; border-radius: 50%; background: #f7f7f7; flex: none; }
.radio.on { border: 4px solid #0a67b7; background: #fff; }
.order-pic { margin-top: 1px; }
.panel-btns { margin-top: auto; display: flex; justify-content: flex-end; gap: 10px; padding-right: 1px; }
.btn { height: 22px; box-sizing: border-box; background: #fdfdfd; border: 1px solid #d0d0d0; border-radius: 4px; font: 11.4px "Open Sans", sans-serif; color: #1b1b1b; padding: 0; white-space: nowrap; }
.w1 { width: 74px; }
.w2 { width: 86px; }
.w3 { width: 76px; }
.dlg-btns { display: flex; justify-content: flex-end; gap: 10px; margin-top: 10px; padding-right: 7px; }
.big-btn { width: 74px; }
.ok { border: 1px solid #0a67b7; background: #fff; }

/* overlays */
.badge { position: absolute; width: 48px; height: 48px; filter: drop-shadow(2px 3px 3px rgba(0, 0, 0, .4)); }
.badge span { position: absolute; left: 0; top: 0; width: 42px; height: 48px; text-align: center; font: 900 36px/49px "Liberation Sans", sans-serif; color: #fff; }
.badge svg { stroke: none; }
.b1 { left: 134px; top: 37px; }
.b2 { left: 494px; top: 91px; }
.b3 { left: 797px; top: 427px; }
.b4 { left: 537px; top: 499px; }
.marker { position: absolute; left: 824px; top: 510px; width: 31px; height: 31px; box-sizing: border-box; border-radius: 50%; background: #d8343c; border: 1px solid #b02a30; box-shadow: 1px 2px 3px rgba(0, 0, 0, .3); }
.pointer { position: absolute; left: 840px; top: 527px; stroke: none; filter: drop-shadow(1px 2px 2px rgba(0, 0, 0, .4)); }
</style>
